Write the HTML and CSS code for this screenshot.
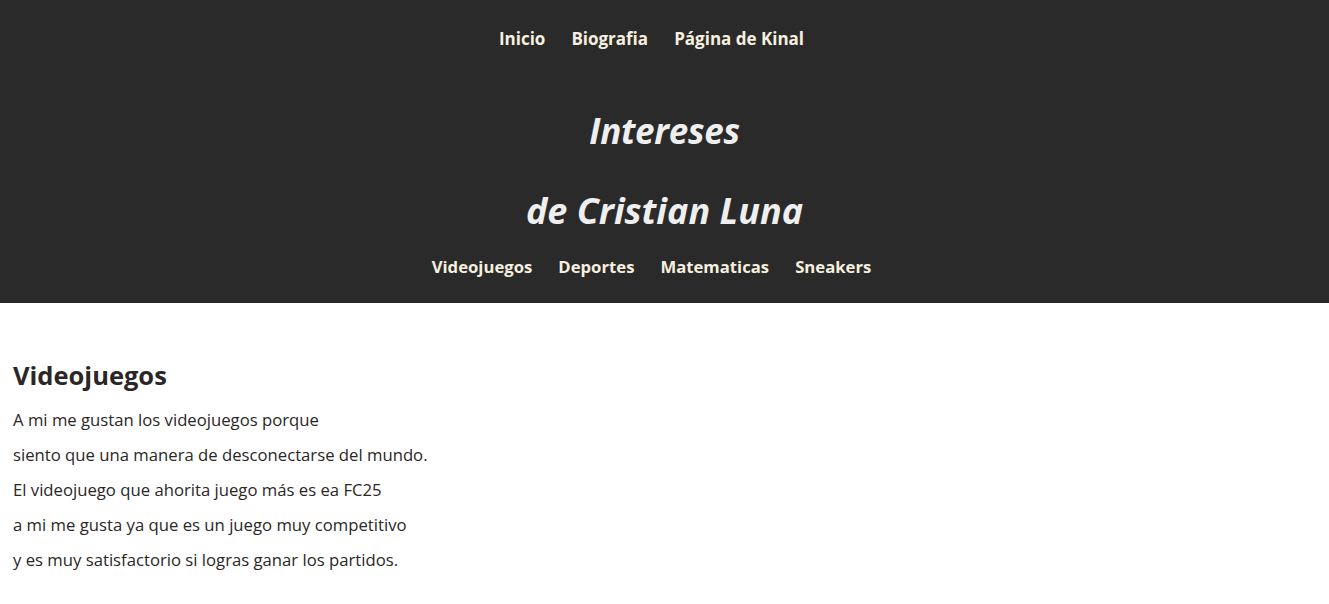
FILE: index.html
```html
<!DOCTYPE html>
<html lang="es">
<head>
<meta charset="utf-8">
<title>Intereses de Cristian Luna</title>
<link rel="stylesheet" href="styles.css">
</head>
<body>
<header class="hero">
  <nav class="nav nav-top">
    <a href="#">Inicio</a>
    <a href="#">Biografia</a>
    <a href="#">Página de Kinal</a>
  </nav>
  <h1 class="title title-first">Intereses</h1>
  <h1 class="title title-second">de Cristian Luna</h1>
  <nav class="nav nav-bottom">
    <a href="#">Videojuegos</a>
    <a href="#">Deportes</a>
    <a href="#">Matematicas</a>
    <a href="#">Sneakers</a>
  </nav>
</header>
<main class="content">
  <section class="topic">
    <h2 class="topic-title">Videojuegos</h2>
    <p>A mi me gustan los videojuegos porque</p>
    <p>siento que una manera de desconectarse del mundo.</p>
    <p>El videojuego que ahorita juego más es ea FC25</p>
    <p>a mi me gusta ya que es un juego muy competitivo</p>
    <p>y es muy satisfactorio si logras ganar los partidos.</p>
  </section>
</main>
</body>
</html>
```

FILE: styles.css
```css
html, body {
  margin: 0;
  padding: 0;
  background: #ffffff;
}

body {
  font-family: "Open Sans", "Noto Sans", sans-serif;
  color: #2a2726;
}

.hero {
  background: #2a2a2a;
  height: 303px;
  display: flex;
  flex-direction: column;
  align-items: center;
}

.nav {
  display: flex;
}

.nav a {
  color: #f7efdf;
  text-decoration: none;
  font-weight: 700;
  font-size: 17px;
  letter-spacing: 0;
  margin-right: 26px;
  line-height: 24px;
}

.nav-top {
  padding-top: 27px;
}

.title {
  margin: 0;
  color: #efefef;
  font-style: italic;
  font-weight: 700;
  font-size: 35px;
  letter-spacing: -0.3px;
  line-height: 42px;
}

.title-first {
  margin-top: 59px;
}

.title-second {
  margin-top: 38px;
  font-size: 36px;
  letter-spacing: 0;
}

.nav-bottom {
  margin-top: 23px;
}

.nav-bottom a {
  font-size: 16.7px;
}

.content {
  padding: 56px 13px 0;
}

.topic-title {
  margin: 0 0 11px;
  font-size: 25.5px;
  font-weight: 700;
  line-height: 32px;
}

.topic p {
  margin: 0;
  font-size: 16.7px;
  line-height: 35px;
}
```
